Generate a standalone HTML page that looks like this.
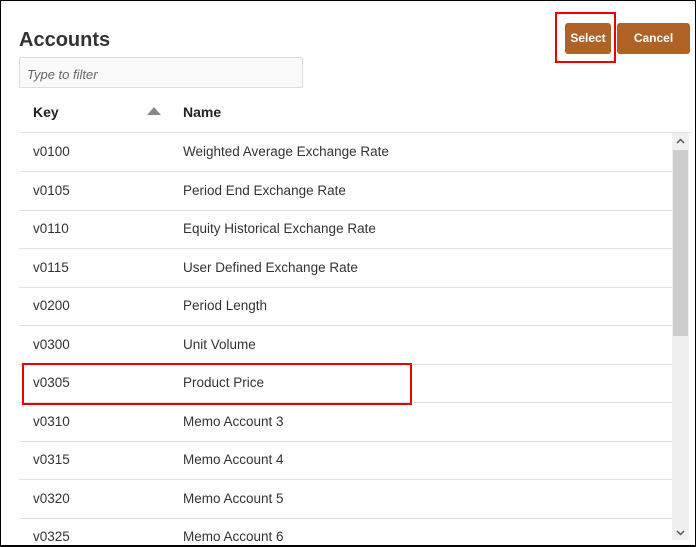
<!DOCTYPE html><html><head><style>
body{margin:0;width:696px;height:547px;overflow:hidden;background:#fff;font-family:"Liberation Sans",sans-serif;position:relative}
.frame{position:absolute;left:0;top:0;width:694px;height:544px;border:1px solid #000;border-bottom-width:2px}
.a{position:absolute}
h1{position:absolute;left:19px;top:29px;margin:0;font-size:20px;font-weight:bold;color:#333}
.filter{left:19px;top:57px;height:31px;border:1px solid #ddd;border-radius:2px;background:#fafafa;font-style:italic;color:#666;font-size:13px;line-height:33px;box-sizing:border-box;width:284px;padding-left:7px}
.btn{background:#b06226;color:#fff;font-weight:bold;font-size:12px;text-align:center;line-height:31px;border-radius:3px;height:31px}
.hdr{font-weight:bold;font-size:14px;color:#222;top:104px}
.line{left:19px;width:653px;height:1px;background:#e2e2e2}
.c{font-size:13.5px;color:#333}
</style></head><body>
<div class="frame"></div>
<h1>Accounts</h1>
<div class="a filter">Type to filter</div>
<div class="a btn" style="left:565px;top:23px;width:46px">Select</div>
<div class="a btn" style="left:617px;top:23px;width:73px">Cancel</div>
<div class="a" style="left:555px;top:12px;width:57px;height:47px;border:2px solid #e00"></div>
<div class="a hdr" style="left:33px">Key</div>
<div class="a" style="left:147px;top:107px;width:0;height:0;border-left:7px solid transparent;border-right:7px solid transparent;border-bottom:8px solid #888"></div>
<div class="a hdr" style="left:183px">Name</div>
<div class="a line" style="top:132px;width:672px"></div>
<div id="rows"></div>
<div class="a" style="left:672px;top:133px;width:17px;height:407px;background:#f0f0f0"></div>
<div class="a" style="left:673px;top:150px;width:15px;height:186px;background:#cdcdcd"></div>
<svg class="a" style="left:676px;top:138px" width="9" height="6"><path d="M1 5L4.5 1.5L8 5" stroke="#555" stroke-width="1.5" fill="none"/></svg>
<svg class="a" style="left:676px;top:530px" width="9" height="6"><path d="M1 1L4.5 4.5L8 1" stroke="#555" stroke-width="1.5" fill="none"/></svg>
<div class="a" style="left:22px;top:363px;width:386px;height:38px;border:2px solid #e00"></div>
<script>
var d=[["v0100","Weighted Average Exchange Rate"],["v0105","Period End Exchange Rate"],["v0110","Equity Historical Exchange Rate"],["v0115","User Defined Exchange Rate"],["v0200","Period Length"],["v0300","Unit Volume"],["v0305","Product Price"],["v0310","Memo Account 3"],["v0315","Memo Account 4"],["v0320","Memo Account 5"],["v0325","Memo Account 6"]];
var h="";d.forEach(function(r,i){var t=133+i*38.5;h+='<div class="a c" style="left:33px;top:'+(t+11)+'px">'+r[0]+'</div><div class="a c" style="left:183px;top:'+(t+11)+'px">'+r[1]+'</div>';if(i<10)h+='<div class="a line" style="top:'+Math.round(t+38)+'px"></div>';});
document.getElementById("rows").innerHTML=h;
</script>
</body></html>
